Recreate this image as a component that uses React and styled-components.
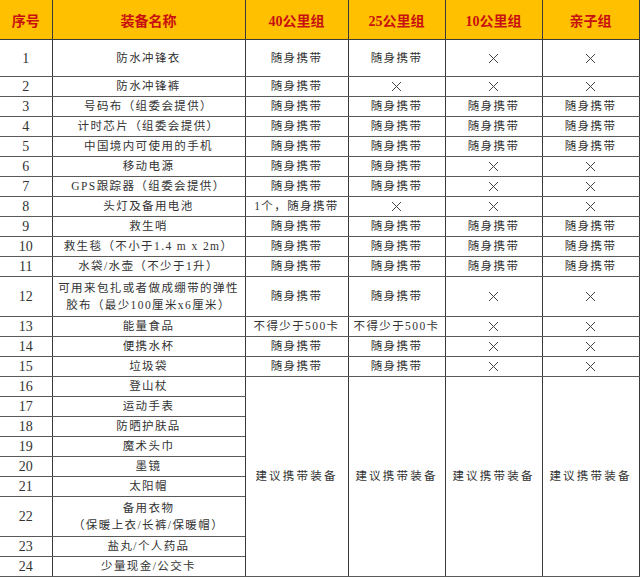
import React from 'react';
import styled, { createGlobalStyle } from 'styled-components';

const GlobalStyle = createGlobalStyle`
  html, body {
    margin: 0;
    padding: 0;
    background: #ffffff;
  }
  body {
    font-family: "Liberation Serif", "Noto Sans CJK SC", serif;
  }
`;

const Table = styled.table`
  width: 639px;
  table-layout: fixed;
  border-collapse: collapse;
  font-family: "Liberation Serif", "Noto Sans CJK SC", serif;
`;

const Col = styled.col`
  width: ${(p) => p.$w}px;
`;

const HeadCell = styled.th`
  height: 39px;
  padding: 0;
  background: #ffc000;
  color: #c81010;
  font-size: 14px;
  font-weight: 700;
  text-align: center;
  vertical-align: middle;
  border: 1px solid #3a3a3a;
  border-top: none;
  &:first-child {
    border-left: none;
  }
`;

const Row = styled.tr`
  height: ${(p) => p.$h}px;
`;

const Cell = styled.td`
  padding: 0 1px;
  color: #333333;
  font-size: ${(p) => (p.$num ? 14 : 11.5)}px;
  line-height: ${(p) => (p.$cross ? 0 : '17px')};
  letter-spacing: ${(p) => (p.$num || p.$cross ? 0 : p.$wide ? '2.2px' : '1.4px')};
  text-align: center;
  vertical-align: middle;
  white-space: nowrap;
  border: 1px solid #3a3a3a;
  border-top-color: #5a5a5a;
  border-bottom-color: #5a5a5a;
  &:first-child {
    border-left: none;
  }
`;

const CrossSvg = styled.svg`
  display: inline-block;
  width: 11px;
  height: 11px;
`;

const CrossIcon = () => (
  <CrossSvg viewBox="0 0 11 11">
    <path d="M1 1 L10 10 M10 1 L1 10" stroke="#444" strokeWidth="1" fill="none" />
  </CrossSvg>
);

const X = 'x';
const C = '随身携带';

const rows = [
  ['1', '防水冲锋衣', [C, C, X, X], 37],
  ['2', '防水冲锋裤', [C, X, X, X]],
  ['3', '号码布（组委会提供）', [C, C, C, C]],
  ['4', '计时芯片（组委会提供）', [C, C, C, C]],
  ['5', '中国境内可使用的手机', [C, C, C, C]],
  ['6', '移动电源', [C, C, X, X]],
  ['7', 'GPS跟踪器（组委会提供）', [C, C, X, X]],
  ['8', '头灯及备用电池', ['1个，随身携带', X, X, X]],
  ['9', '救生哨', [C, C, C, C]],
  ['10', '救生毯（不小于1.4 m x 2m）', [C, C, C, C]],
  ['11', '水袋/水壶（不少于1升）', [C, C, C, C]],
  ['12', ['可用来包扎或者做成绷带的弹性', '胶布（最少100厘米x6厘米）'], [C, C, X, X], 40],
  ['13', '能量食品', ['不得少于500卡', '不得少于500卡', X, X]],
  ['14', '便携水杯', [C, C, X, X]],
  ['15', '垃圾袋', [C, C, X, X]],
];

const extras = [
  ['16', '登山杖'],
  ['17', '运动手表'],
  ['18', '防晒护肤品'],
  ['19', '魔术头巾'],
  ['20', '墨镜'],
  ['21', '太阳帽'],
  ['22', ['备用衣物', '（保暖上衣/长裤/保暖帽）'], 40],
  ['23', '盐丸/个人药品'],
  ['24', '少量现金/公交卡'],
];

const colWidths = [52, 193, 103, 97, 97, 97];
const heads = ['40公里组', '25公里组', '10公里组', '亲子组'];

const Name = ({ value }) =>
  Array.isArray(value) ? (
    <>
      {value[0]}
      <br />
      {value[1]}
    </>
  ) : (
    value
  );

const Value = ({ v }) =>
  v === X ? (
    <Cell $cross>
      <CrossIcon />
    </Cell>
  ) : (
    <Cell>{v}</Cell>
  );

export default function App() {
  return (
    <>
      <GlobalStyle />
      <Table>
        <colgroup>
          {colWidths.map((w, i) => (
            <Col key={i} $w={w} />
          ))}
        </colgroup>
        <thead>
          <tr>
            <HeadCell>序号</HeadCell>
            <HeadCell>装备名称</HeadCell>
            {heads.map((h) => (
              <HeadCell key={h}>{h}</HeadCell>
            ))}
          </tr>
        </thead>
        <tbody>
          {rows.map(([n, name, vals, h]) => (
            <Row key={n} $h={h || 20}>
              <Cell $num>{n}</Cell>
              <Cell>
                <Name value={name} />
              </Cell>
              {vals.map((v, i) => (
                <Value key={i} v={v} />
              ))}
            </Row>
          ))}
          {extras.map(([n, name, h], idx) => (
            <Row key={n} $h={h || 20}>
              <Cell $num>{n}</Cell>
              <Cell>
                <Name value={name} />
              </Cell>
              {idx === 0 &&
                [0, 1, 2, 3].map((i) => (
                  <Cell key={i} $wide rowSpan={extras.length}>
                    建议携带装备
                  </Cell>
                ))}
            </Row>
          ))}
        </tbody>
      </Table>
    </>
  );
}
